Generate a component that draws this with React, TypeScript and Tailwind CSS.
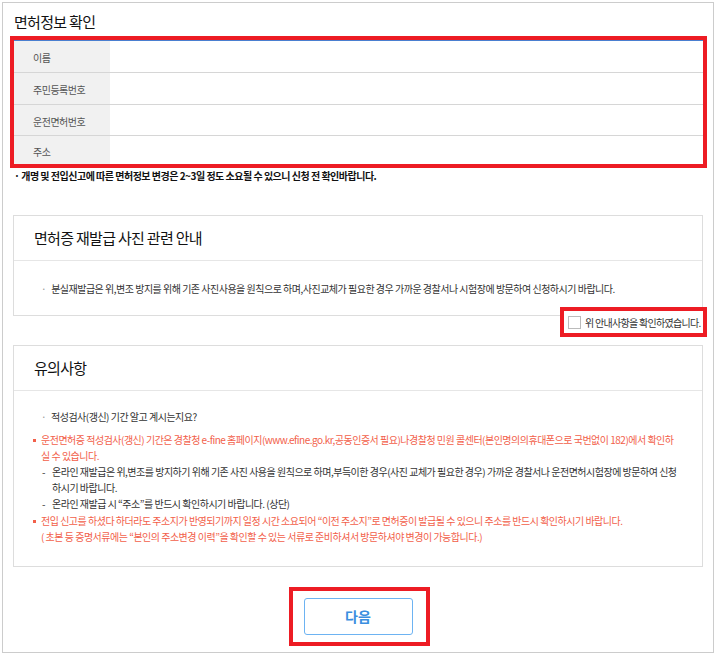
import type { FC } from "react";

const rows = [
  { label: "이름", h: "h-[32px]" },
  { label: "주민등록번호", h: "h-[32px]" },
  { label: "운전면허번호", h: "h-[31px]" },
  { label: "주소", h: "h-[28px]" },
];

const App: FC = () => {
  return (
    <div className="w-[718px] h-[657px] bg-white pt-[2px] pl-[2px] font-['Noto_Sans_CJK_KR','Noto_Sans',sans-serif] text-[#333]">
      <div className="w-[712px] h-[651px] border border-[#cccccc] pl-[10px] pt-[9px]">
        <div className="w-[690px]">
          <h2 className="h-[20px] leading-[20px] text-[15px] tracking-[-0.7px] text-[#111] pl-[1px]">
            면허정보 확인
          </h2>

          {/* 면허정보 표 */}
          <div className="mt-[4px] ml-[-3px] w-[697px] border-4 border-[#ed1c24]">
            <div className="border-t border-[#4a7fd0]">
              {rows.map((row, i) => (
                <div
                  key={row.label}
                  className={
                    i < rows.length - 1
                      ? `flex ${row.h} border-b border-[#d6d6d6]`
                      : `flex ${row.h}`
                  }
                >
                  <div className="w-[96px] bg-[#f1f1f1] pl-[19px] pt-[2px] flex items-center text-[10px] tracking-[-0.5px] text-[#555]">
                    {row.label}
                  </div>
                  <div className="flex-1" />
                </div>
              ))}
            </div>
          </div>
          <p className="mt-[1px] h-[14px] leading-[14px] pl-[1px] text-[10px] tracking-[-0.5px] font-bold text-[#111]">
            · 개명 및 전입신고에 따른 면허정보 변경은 2~3일 정도 소요될 수 있으니 신청 전 확인바랍니다.
          </p>

          {/* 사진 관련 안내 */}
          <div className="mt-[32px] border border-[#dddddd]">
            <div className="h-[45px] flex items-center px-[20px] border-b border-[#e6e6e6] text-[15px] tracking-[-0.7px] text-[#111]">
              면허증 재발급 사진 관련 안내
            </div>
            <div className="h-[54px] flex items-center pl-[27px] text-[10px] tracking-[-0.5px] text-[#333]">
              <span className="text-[#999] mr-[5px]">·</span>
              분실재발급은 위,변조 방지를 위해 기존 사진사용을 원칙으로 하며,사진교체가 필요한 경우 가까운 경찰서나 시험장에 방문하여 신청하시기 바랍니다.
            </div>
          </div>

          <div className="flex justify-end mr-[-4px] mt-[-9px] relative">
            <label className="h-[30px] w-[147px] border-4 border-[#ed1c24] bg-white flex items-center pl-[4px] gap-[4px] text-[10px] tracking-[-0.7px] text-[#333] whitespace-nowrap overflow-hidden">
              <span className="w-[13px] h-[13px] border border-[#bbbbbb] bg-white shrink-0" />
              위 안내사항을 확인하였습니다.
            </label>
          </div>

          {/* 유의사항 */}
          <div className="mt-[8px] border border-[#dddddd]">
            <div className="h-[45px] flex items-center px-[20px] border-b border-[#e6e6e6] text-[15px] tracking-[-0.7px] text-[#111]">
              유의사항
            </div>
            <div className="pt-[18px] pb-[21px] text-[10px] tracking-[-0.5px] leading-[16px] whitespace-nowrap">
              <div className="flex pl-[27px]">
                <span className="w-[10px] text-[#999]">·</span>
                <span>적성검사(갱신) 기간 알고 계시는지요?</span>
              </div>

              <div className="flex pl-[19px] mt-[7px] text-[#f2604a]">
                <span className="w-[8px] pt-[7px]">
                  <span className="block w-[3px] h-[3px] bg-[#f2604a]" />
                </span>
                <div>
                  <div>
                    운전면허증 적성검사(갱신) 기간은 경찰청 e-fine 홈페이지(www.efine.go.kr,공동인증서 필요)나경찰청 민원 콜센터(본인명의의휴대폰으로 국번없이 182)에서 확인하
                  </div>
                  <div>실 수 있습니다.</div>
                </div>
              </div>

              <div className="flex pl-[28px]">
                <span className="w-[10px]">-</span>
                <div>
                  <div>
                    온라인 재발급은 위,변조를 방지하기 위해 기존 사진 사용을 원칙으로 하며,부득이한 경우(사진 교체가 필요한 경우) 가까운 경찰서나 운전면허시험장에 방문하여 신청
                  </div>
                  <div>하시기 바랍니다.</div>
                </div>
              </div>
              <div className="flex pl-[28px]">
                <span className="w-[10px]">-</span>
                <span>온라인 재발급 시 “주소”를 반드시 확인하시기 바랍니다. (상단)</span>
              </div>

              <div className="flex pl-[19px] mt-[1px] text-[#f2604a]">
                <span className="w-[8px] pt-[7px]">
                  <span className="block w-[3px] h-[3px] bg-[#f2604a]" />
                </span>
                <div>
                  <div>
                    전입 신고를 하셨다 하더라도 주소지가 반영되기까지 일정 시간 소요되어 “이전 주소지”로 면허증이 발급될 수 있으니 주소를 반드시 확인하시기 바랍니다.
                  </div>
                  <div>( 초본 등 증명서류에는 “본인의 주소변경 이력”을 확인할 수 있는 서류로 준비하셔서 방문하셔야 변경이 가능합니다.)</div>
                </div>
              </div>
            </div>
          </div>

          <div className="mt-[20px] flex justify-center pl-[2px]">
            <div className="border-4 border-[#ed1c24] pt-[7px] pb-[7px] pl-[11px] pr-[13px]">
              <button className="w-[109px] h-[37px] border border-[#6db3f2] rounded-[3px] bg-white text-[#3a8ee0] text-[14px] font-semibold">
                다음
              </button>
            </div>
          </div>
        </div>
      </div>
    </div>
  );
};

export default App;
